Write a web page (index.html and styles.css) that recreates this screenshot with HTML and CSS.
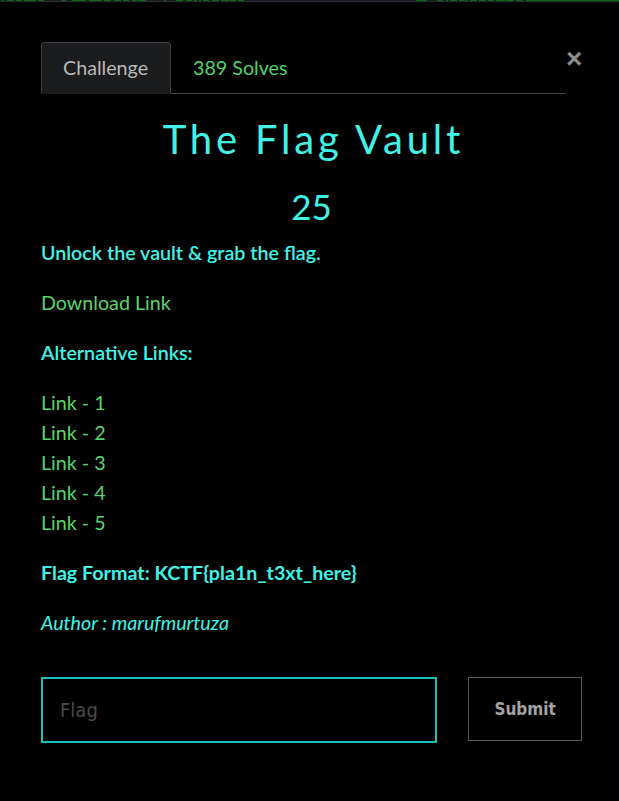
FILE: index.html
```html
<!DOCTYPE html>
<html>
<head>
<meta charset="utf-8">
<link rel="stylesheet" href="styles.css">
</head>
<body>
<div class="topstrip"></div>
<div class="modal">
  <div class="navrow">
    <ul class="tabs">
      <li class="tab active">Challenge</li>
      <li class="tab solves">389 Solves</li>
    </ul>
    <button class="close">&times;</button>
  </div>
  <h1 class="title">The Flag Vault</h1>
  <div class="value">25</div>
  <div class="desc">
    <p class="strong">Unlock the vault &amp; grab the flag.</p>
    <p><a class="link">Download Link</a></p>
    <p class="strong">Alternative Links:</p>
    <p class="links">
      <a class="link">Link - 1</a>
      <a class="link">Link - 2</a>
      <a class="link">Link - 3</a>
      <a class="link">Link - 4</a>
      <a class="link">Link - 5</a>
    </p>
    <p class="bold">Flag Format: KCTF{pla1n_t3xt_here}</p>
    <p class="author">Author : marufmurtuza</p>
  </div>
  <form class="submit-row">
    <input class="flag-input" type="text" placeholder="Flag">
    <button type="button" class="submit">Submit</button>
  </form>
</div>
</body>
</html>
```
FILE: styles.css
```css
* { box-sizing: border-box; }
html, body { margin: 0; padding: 0; background: #000; }
body { font-family: Lato, "Open Sans", sans-serif; width: 619px; height: 801px; overflow: hidden; }

.topstrip {
  height: 3px;
  background:
    linear-gradient(90deg,
      #1a1a22 0 2px, #0c6a12 2px 4px, #1a1a22 4px 7px, #0c6a12 7px 14px, #1a1a22 14px 16px,
      #0c6a12 16px 22px, #1a1a22 22px 24px, #0c6a12 24px 36px, #1a1a22 36px 38px, #0c6a12 38px 44px,
      #1a1a22 44px 62px, #0c6a12 62px 66px, #1a1a22 66px 72px, #0c6a12 72px 86px, #1a1a22 86px 89px,
      #0c6a12 89px 102px, #1a1a22 102px 104px, #0c6a12 104px 111px, #1a1a22 111px 114px, #0c6a12 114px 121px,
      #1a1a22 121px 123px, #0c6a12 123px 129px, #1a1a22 129px 132px, #0c6a12 132px 137px, #1a1a22 137px 138px,
      #0c6a12 138px 146px, #1a1a22 146px 164px, #0c6a12 164px 166px, #1a1a22 166px 176px, #0c6a12 176px 183px,
      #1a1a22 183px 186px, #0c6a12 186px 192px, #1a1a22 192px 194px, #0c6a12 194px 197px, #1a1a22 197px 199px,
      #0c6a12 199px 201px, #1a1a22 201px 203px, #0c6a12 203px 209px, #1a1a22 209px 212px, #0c6a12 212px 219px,
      #1a1a22 219px 221px, #0c6a12 221px 229px, #1a1a22 229px 230px, #0c6a12 230px 236px, #1a1a22 236px 238px,
      #0c6a12 238px 244px, #1a1a22 244px 416px, #0c6a12 416px 427px, #1a1a22 427px 437px, #0c6a12 437px 443px,
      #1a1a22 443px 446px, #0c6a12 446px 448px, #1a1a22 448px 450px, #0c6a12 450px 457px, #1a1a22 457px 459px,
      #0c6a12 459px 465px, #1a1a22 465px 466px, #0c6a12 466px 468px, #1a1a22 468px 470px, #0c6a12 470px 477px,
      #1a1a22 477px 479px, #0c6a12 479px 486px, #1a1a22 486px 488px, #0c6a12 488px 494px, #1a1a22 494px 496px,
      #0c6a12 496px 505px, #1a1a22 505px 506px, #0c6a12 506px 514px, #1a1a22 514px 516px, #0c6a12 516px 523px,
      #1a1a22 523px 526px, #0c6a12 526px 619px)
      top / 100% 1px no-repeat,
    linear-gradient(#2a2a36, #2a2a36) 0 1px / 100% 1px no-repeat,
    #050505;
}

.modal { padding: 39px 37px 0 41px; }

.navrow { display: flex; align-items: flex-start; }
.tabs {
  flex: 1; display: flex; list-style: none; margin: 0; padding: 0;
  border-bottom: 1px solid #444;
}
.tab {
  font-size: 19.7px; line-height: 26px;
  padding: 12px 20px 12px 21px;
  border: 1px solid transparent; border-radius: 4px 4px 0 0;
  margin-bottom: -1px;
}
.tab.active {
  background: #1b1c1e; border-color: #3e3f42 #3e3f42 transparent;
  color: #b8b8b8; width: 130px;
}
.tab.solves { color: #4fd36e; padding-left: 21px; }

.close {
  background: none; border: 0; padding: 0; margin: 2px 0 0 0;
  width: 16px; height: 30px;
  color: #8c8c8c; font-size: 28px; font-weight: 700; line-height: 30px;
  font-family: "Liberation Sans", sans-serif; text-align: right;
}

.title {
  margin: 20px 0 0; padding-left: 4px; text-align: center;
  font-family: Lato, sans-serif; font-weight: 400;
  font-size: 40px; line-height: 50px; letter-spacing: 3.8px;
  color: #3ff3e6;
}
.value {
  margin-top: 20px; text-align: center;
  font-size: 35px; line-height: 44px; color: #3ff3e6; font-weight: 400;
}

.desc { margin-top: 10px; font-size: 19.7px; line-height: 30px; color: #3ff3e6; }
.desc p { margin: 0 0 20px; }
.strong { font-weight: 600; }
.bold { font-weight: 700; }
.author { font-style: italic; }
.link { color: #57d46e; display: block; }
.links { display: flex; flex-direction: column; }

.submit-row { display: flex; align-items: flex-start; gap: 31px; margin-top: 39px; }
.flag-input {
  width: 397px; height: 66px;
  background: #000; border: 2px solid #18c0b6;
  padding: 0 17px; font-size: 20px; color: #ccc;
  font-family: "DejaVu Sans Condensed", "DejaVu Sans", sans-serif; outline: none;
}
.flag-input::placeholder { color: #4a4a4a; }
.submit {
  width: 114px; height: 64px;
  background: #000; border: 1px solid #5b5651;
  color: #a3a3a3; font-family: "DejaVu Sans Condensed", "DejaVu Sans", sans-serif; font-weight: 700; font-size: 17px;
}
```
